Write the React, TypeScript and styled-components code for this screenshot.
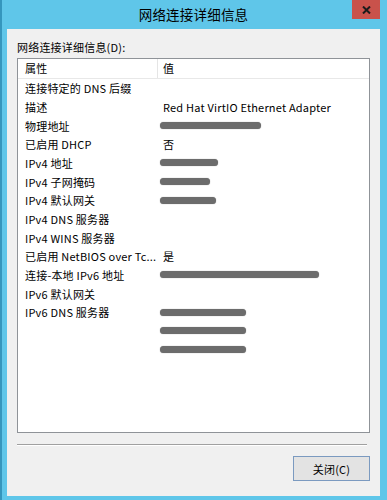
import React from "react";
import styled, { createGlobalStyle } from "styled-components";

const GlobalStyle = createGlobalStyle`
  html, body {
    margin: 0;
    padding: 0;
    background: #5fc6e9;
  }
  * {
    box-sizing: border-box;
  }
`;

const FONT = `"Noto Sans CJK SC", "Noto Sans", sans-serif`;

const Window = styled.div`
  width: 387px;
  height: 500px;
  display: flex;
  flex-direction: column;
  background: #5fc6e9;
  border-left: 2px solid #3596bd;
  font-family: ${FONT};
  color: #000;
`;

const TitleBar = styled.div`
  height: 29px;
  display: grid;
  grid-template-columns: 1fr auto 1fr;
  margin-left: -2px;
`;

const Title = styled.div`
  grid-column: 2;
  font-size: 13.5px;
  line-height: 29px;
  letter-spacing: 0.2px;
`;

const CloseButton = styled.div`
  grid-column: 3;
  justify-self: end;
  align-self: start;
  width: 28px;
  height: 19px;
  margin-right: 7px;
  background: #c9524b;
  display: flex;
  align-items: center;
  justify-content: center;
`;

const Body = styled.div`
  flex: 1;
  margin: 0 7px 4px 5px;
  background: #f0f0f0;
  padding: 10px 10px 0 10px;
  display: flex;
  flex-direction: column;
  font-size: 11px;
  letter-spacing: 0.2px;
`;

const Label = styled.div`
  line-height: 16px;
  margin-bottom: 3px;
`;

const ListBox = styled.div`
  height: 375px;
  background: #fff;
  border: 1px solid #8f9398;
  display: flex;
  flex-direction: column;
  overflow: hidden;
`;

const Header = styled.div`
  height: 20px;
  display: flex;
  border-bottom: 1px solid #e8e8e8;
  line-height: 19px;
`;

const HeaderCell = styled.div<{ $first?: boolean }>`
  width: ${(p) => (p.$first ? "140px" : "auto")};
  flex: ${(p) => (p.$first ? "none" : "1")};
  padding-left: ${(p) => (p.$first ? "7px" : "5px")};
  border-right: ${(p) => (p.$first ? "1px solid #e5e5e5" : "none")};
`;

const Row = styled.div`
  height: 18.67px;
  display: flex;
  align-items: center;
  white-space: nowrap;
`;

const NameCell = styled.div`
  width: 140px;
  flex: none;
  padding-left: 7px;
  overflow: hidden;
`;

const ValueCell = styled.div`
  flex: 1;
  padding-left: 5px;
  display: flex;
  align-items: center;
`;

const Blur = styled.div<{ $w: number }>`
  width: ${(p) => p.$w}px;
  height: 7px;
  border-radius: 4px;
  background: #6c6c6c;
  box-shadow: 0 0 1px #8a8a8a;
  margin-left: -3px;
`;

const Separator = styled.div`
  margin-top: 11px;
  height: 2px;
  border-top: 1px solid #a0a0a0;
  border-bottom: 1px solid #ffffff;
  margin-right: 3px;
`;

const Footer = styled.div`
  display: flex;
  justify-content: flex-end;
  margin-top: 10px;
`;

const Button = styled.div`
  width: 77px;
  height: 25px;
  border: 1px solid #7b9ac0;
  background: #e3e3e3;
  display: flex;
  align-items: center;
  justify-content: center;
`;

type Item = { name: string; value?: string; blur?: number };

const items: Item[] = [
  { name: "连接特定的 DNS 后缀" },
  { name: "描述", value: "Red Hat VirtIO Ethernet Adapter" },
  { name: "物理地址", blur: 101 },
  { name: "已启用 DHCP", value: "否" },
  { name: "IPv4 地址", blur: 58 },
  { name: "IPv4 子网掩码", blur: 50 },
  { name: "IPv4 默认网关", blur: 56 },
  { name: "IPv4 DNS 服务器" },
  { name: "IPv4 WINS 服务器" },
  { name: "已启用 NetBIOS over Tc...", value: "是" },
  { name: "连接-本地 IPv6 地址", blur: 159 },
  { name: "IPv6 默认网关" },
  { name: "IPv6 DNS 服务器", blur: 86 },
  { name: "", blur: 86 },
  { name: "", blur: 86 },
];

export default function App() {
  return (
    <>
      <GlobalStyle />
      <Window>
        <TitleBar>
          <Title>网络连接详细信息</Title>
          <CloseButton>
            <svg width="9" height="8" viewBox="0 0 9 8">
              <path d="M1 0.5 L8 7.5 M8 0.5 L1 7.5" stroke="#1b1b1b" strokeWidth="2" />
            </svg>
          </CloseButton>
        </TitleBar>
        <Body>
          <Label>网络连接详细信息(D):</Label>
          <ListBox>
            <Header>
              <HeaderCell $first>属性</HeaderCell>
              <HeaderCell>值</HeaderCell>
            </Header>
            {items.map((it, i) => (
              <Row key={i}>
                <NameCell>{it.name}</NameCell>
                <ValueCell>
                  {it.value}
                  {it.blur ? <Blur $w={it.blur} /> : null}
                </ValueCell>
              </Row>
            ))}
          </ListBox>
          <Separator />
          <Footer>
            <Button>关闭(C)</Button>
          </Footer>
        </Body>
      </Window>
    </>
  );
}
